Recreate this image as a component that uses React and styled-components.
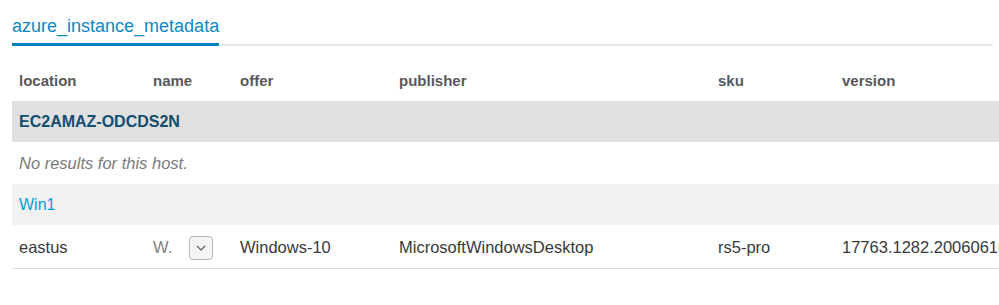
import styled, { createGlobalStyle } from "styled-components";

// ==================== Global ====================
const GlobalStyle = createGlobalStyle`
  html, body {
    margin: 0;
    padding: 0;
    background: #fff;
    overflow: hidden;
  }
  body {
    font-family: "Liberation Sans", Arial, sans-serif;
    color: #39393b;
  }
`;

const Page = styled("div")({
  width: "999px",
  height: "305px",
  overflow: "hidden",
  paddingLeft: "12px",
  boxSizing: "border-box",
});

// ==================== Tabs ====================
const TabBar = styled("div")({
  display: "flex",
  width: "981px",
  borderBottom: "2px solid #e8e8e8",
  paddingTop: "15px",
});

const Tab = styled("div")(({ active = false }) => ({
  fontSize: "18px",
  lineHeight: "22px",
  color: active ? "#0f87c4" : "#555",
  paddingBottom: "6px",
  marginBottom: "-2px",
  borderBottom: active ? "3px solid #0a80bf" : "3px solid transparent",
}));

// ==================== Table ====================
const Table = styled("table")({
  width: "1088px",
  borderCollapse: "collapse",
  tableLayout: "fixed",
  marginTop: "14px",
});

const HeadCell = styled("th")({
  textAlign: "left",
  fontSize: "15px",
  fontWeight: "bold",
  color: "#58585b",
  height: "41px",
  padding: "0 7px",
  verticalAlign: "middle",
});

const GroupRow = styled("tr")(({ level = "host" }) => ({
  backgroundColor: level === "host" ? "#e0e0e0" : "#f2f2f2",
}));

const GroupCell = styled("td")(({ level = "host" }) => ({
  height: "41px",
  padding: "0 7px",
  fontSize: "16px",
  fontWeight: level === "host" ? "bold" : "normal",
  color: level === "host" ? "#134e6f" : "#049fd9",
}));

const EmptyCell = styled("td")({
  height: "42px",
  padding: "0 7px",
  fontSize: "16.5px",
  fontStyle: "italic",
  color: "#7a7a7c",
});

const DataRow = styled("tr")({
  borderBottom: "1px solid #dcdcdc",
});

const Cell = styled("td")(({ muted = false }) => ({
  height: "41px",
  padding: "2px 7px 0",
  fontSize: "16.5px",
  color: muted ? "#7f7f81" : "#39393b",
  whiteSpace: "nowrap",
  overflow: "hidden",
}));

const NameWrap = styled("div")({
  display: "flex",
  alignItems: "center",
  gap: "17px",
});

const ExpandButton = styled("button")({
  width: "24px",
  height: "24px",
  padding: 0,
  display: "flex",
  alignItems: "center",
  justifyContent: "center",
  background: "#f4f4f4",
  border: "1px solid #b8b8b8",
  borderRadius: "4px",
});

const Chevron = () => (
  <svg width="10" height="6" viewBox="0 0 10 6">
    <path d="M1 1 L5 5 L9 1" fill="none" stroke="#555" strokeWidth="1.1" />
  </svg>
);

const columns = [
  { key: "location", width: 134 },
  { key: "name", width: 87 },
  { key: "offer", width: 159 },
  { key: "publisher", width: 319 },
  { key: "sku", width: 124 },
  { key: "version", width: 265 },
];

export default function App() {
  return (
    <Page>
      <GlobalStyle />
      <TabBar>
        <Tab active>azure_instance_metadata</Tab>
      </TabBar>
      <Table>
        <colgroup>
          {columns.map((c) => (
            <col key={c.key} style={{ width: c.width }} />
          ))}
        </colgroup>
        <thead>
          <tr>
            {columns.map((c) => (
              <HeadCell key={c.key}>{c.key}</HeadCell>
            ))}
          </tr>
        </thead>
        <tbody>
          <GroupRow level="host">
            <GroupCell level="host" colSpan={6}>
              EC2AMAZ-ODCDS2N
            </GroupCell>
          </GroupRow>
          <tr>
            <EmptyCell colSpan={6}>No results for this host.</EmptyCell>
          </tr>
          <GroupRow level="sub">
            <GroupCell level="sub" colSpan={6}>
              Win1
            </GroupCell>
          </GroupRow>
          <DataRow>
            <Cell>eastus</Cell>
            <Cell muted>
              <NameWrap>
                <span>W.</span>
                <ExpandButton>
                  <Chevron />
                </ExpandButton>
              </NameWrap>
            </Cell>
            <Cell>Windows-10</Cell>
            <Cell>MicrosoftWindowsDesktop</Cell>
            <Cell>rs5-pro</Cell>
            <Cell>17763.1282.2006061636</Cell>
          </DataRow>
        </tbody>
      </Table>
    </Page>
  );
}
